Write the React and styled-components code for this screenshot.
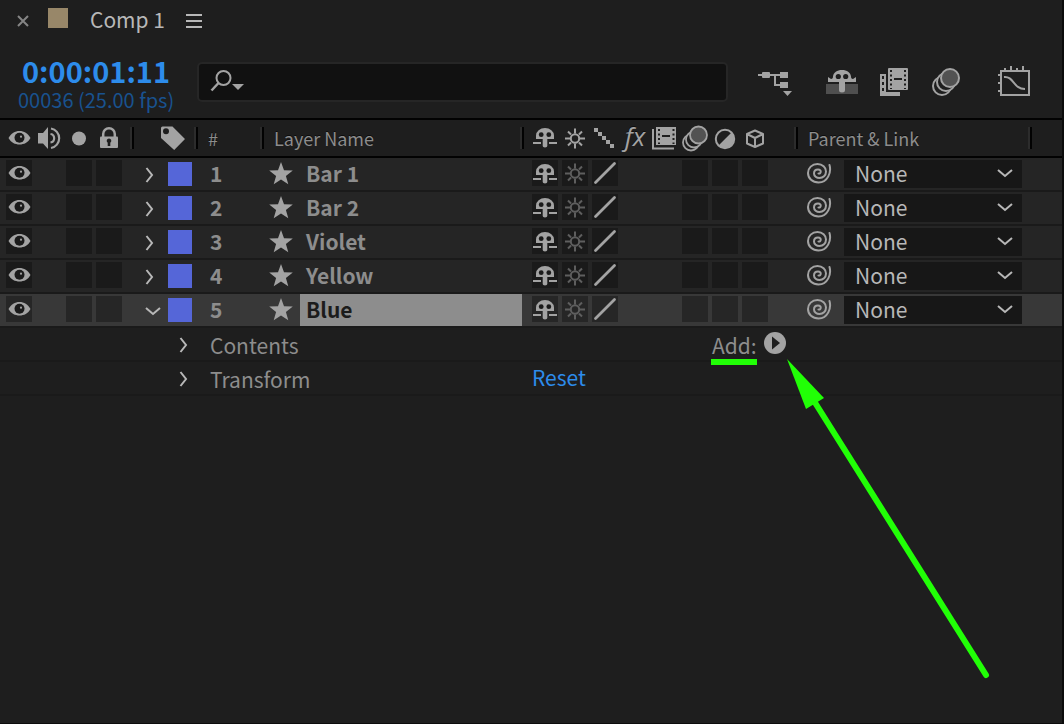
import React from "react";
import styled, { createGlobalStyle, css } from "styled-components";

const color = {
  panel: "#1e1e1e",
  row: "#252525",
  rowSelected: "#383838",
  well: "#1a1a1a",
  wellSelected: "#262626",
  line: "#1a1a1a",
  icon: "#a3a3a3",
  iconDim: "#5e5e5e",
  text: "#8d8d8d",
  textBright: "#b8b8b8",
  blue: "#2d8ceb",
  blueDim: "#19528f",
  label: "#5566d8",
  mark: "#21ff06",
};

const GlobalStyle = createGlobalStyle`
  * { box-sizing: border-box; }
  body {
    margin: 0;
    background: ${color.panel};
    color: ${color.text};
    font-family: "Noto Sans CJK SC", "Open Sans", sans-serif;
    font-size: 21px;
    line-height: 30px;
  }
  button, input, select { font: inherit; color: inherit; }
  svg { display: block; flex: none; }
`;

const Panel = styled.main`
  display: flex;
  flex-direction: column;
  min-height: 100vh;
  overflow: hidden;
  border-right: 2px solid #0c0c0c;
  border-bottom: 1px solid #0c0c0c;
`;

const TabBar = styled.header`
  display: flex;
  align-items: center;
  height: 42px;
  padding-left: 14px;
`;

const PlainButton = styled.button`
  display: flex;
  align-items: center;
  justify-content: center;
  flex: none;
  padding: 0;
  border: 0;
  background: none;
`;

const TabSwatch = styled.span`
  align-self: flex-start;
  width: 20px;
  height: 20px;
  margin: 8px 22px 0 16px;
  background: #988769;
`;

const TabTitle = styled.h1`
  margin: 0 18px 0 0;
  padding-bottom: 4px;
  font-size: 21px;
  font-weight: 400;
  color: ${color.textBright};
`;

const Toolbar = styled.div`
  display: flex;
  align-items: center;
  height: 72px;
  margin-top: 4px;
  padding-right: 30px;
`;

const TimeBlock = styled.div`
  flex: none;
  width: 197px;
  padding-top: 4px;
  padding-left: 18px;
`;

const TimeCode = styled.div`
  padding-left: 4px;
  font-size: 29px;
  font-weight: 700;
  line-height: 32px;
  color: ${color.blue};
`;

const FrameInfo = styled.div`
  font-size: 20px;
  line-height: 28px;
  color: ${color.blueDim};
`;

const SearchBox = styled.label`
  display: flex;
  align-items: center;
  flex: 1;
  min-width: 0;
  height: 40px;
  margin-right: 30px;
  padding-left: 11px;
  border: 2px solid #262626;
  border-radius: 5px;
  background: #111;
`;

const SearchInput = styled.input`
  flex: 1;
  min-width: 0;
  border: 0;
  outline: 0;
  background: none;
`;

const ToolGroup = styled.div`
  display: flex;
  gap: 16px;
`;

const ToolButton = styled(PlainButton)`
  width: 36px;
  height: 36px;
  margin-left: ${(p) => (p.$apart ? "16px" : "0")};
  margin-right: ${(p) => (p.$before ? "14px" : "0")};
`;

const Table = styled.table`
  width: 100%;
  table-layout: fixed;
  border-spacing: 0;
`;

const Col = styled.col`
  width: ${(p) => p.$width || "auto"};
`;

const HeadCell = styled.th`
  height: 40px;
  padding: 0;
  border-top: 2px solid #020202;
  border-bottom: 2px solid #020202;
  font-size: 18px;
  font-weight: 400;
  line-height: 36px;
  text-align: left;
  white-space: nowrap;
  text-shadow: 0 -1px 0 #0c0c0c;
`;

const HeadInner = styled.div`
  display: flex;
  align-items: center;
  gap: 4px;
  height: 36px;
  padding-left: ${(p) => p.$indent}px;
`;

const Divider = styled.span`
  flex: none;
  width: 4px;
  height: 22px;
  margin-left: auto;
  border-left: 2px solid #2c2c2c;
  border-right: 2px solid #020202;
`;

const Row = styled.tr`
  background: ${(p) => (p.$selected ? color.rowSelected : p.$sub ? color.panel : color.row)};
`;

const Cell = styled.td`
  height: 34px;
  padding: 0;
  border-bottom: 2px solid ${color.line};
  white-space: nowrap;
`;

const CellInner = styled.div`
  display: flex;
  align-items: center;
  gap: ${(p) => p.$gap || 0}px;
  height: 32px;
  padding-left: ${(p) => p.$indent || 0}px;
`;

const Wells = styled(CellInner)`
  align-items: flex-start;
  gap: 4px;
  padding-top: 2px;
`;

const Well = styled(PlainButton)`
  width: 26px;
  height: 26px;
  background: ${(p) => (p.$selected ? color.wellSelected : color.well)};
  ${(p) => p.$blank && css`visibility: hidden;`}
`;

const LabelSwatch = styled.span`
  width: 24px;
  height: 24px;
  background: ${color.label};
`;

const Strong = styled.span`
  padding-bottom: 2px;
  font-weight: 700;
`;

const LayerName = styled(Strong)`
  flex: 1;
  margin-right: 2px;
  padding-left: 6px;
  ${(p) => p.$selected && css`
    background: #8d8d8d;
    color: #1c1c1c;
  `}
`;

const ParentInner = styled(Wells)`
  gap: 12px;
  padding-left: 8px;
  padding-right: 10px;
`;

const SelectBox = styled.div`
  display: flex;
  position: relative;
  flex: 1;
  min-width: 0;
  svg {
    position: absolute;
    top: 5px;
    right: 9px;
    pointer-events: none;
  }
`;

const Select = styled.select`
  appearance: none;
  width: 100%;
  height: 28px;
  padding: 0 30px 2px 11px;
  border: 0;
  border-radius: 0;
  background: #171717;
  color: ${color.textBright};
  line-height: 26px;
`;

const PropertyName = styled.span`
  padding-top: 2px;
`;

const AddLabel = styled.label`
  position: relative;
  padding-top: 2px;
  &::after {
    content: "";
    position: absolute;
    left: -1px;
    right: 0;
    bottom: -5px;
    height: 6px;
    background: ${color.mark};
  }
`;

const AddButton = styled(PlainButton)`
  position: relative;
  width: 22px;
  height: 22px;
  margin-bottom: 2px;
`;

const Arrow = styled.svg`
  position: absolute;
  top: 27px;
  left: 23px;
  overflow: visible;
  pointer-events: none;
`;

const ResetLink = styled.a`
  padding-bottom: 2px;
  color: ${color.blue};
  text-decoration: none;
`;

const Glyph = ({ size = 26, children, ...rest }) => (
  <svg width={size} height={size} viewBox={`0 0 ${size} ${size}`} fill="none" aria-hidden="true" {...rest}>
    {children}
  </svg>
);

const EyeIcon = () => (
  <Glyph>
    <path d="M2.500 13C5 8.500 9 6 13.500 6S22 8.500 24.500 13C22 17.500 18 19.500 13.500 19.500S5 17.500 2.500 13Z" fill={color.icon} />
    <circle cx="13.500" cy="12.700" r="5" fill="#1a1a1a" />
    <circle cx="15" cy="11.700" r="1.100" fill={color.icon} />
  </Glyph>
);

const SpeakerIcon = () => (
  <Glyph>
    <path d="M2 8H7L12 2V24L7 18.500H2Z" fill={color.icon} />
    <g stroke={color.icon} strokeWidth="2.200">
      <path d="M14.500 9A4.300 4.300 0 0 1 14.500 17.500" />
      <path d="M15 3.500A9.900 9.900 0 0 1 15 23" />
    </g>
  </Glyph>
);

const SoloIcon = () => (
  <Glyph>
    <circle cx="13" cy="13.500" r="7" fill={color.icon} />
  </Glyph>
);

const LockIcon = () => (
  <Glyph>
    <path d="M7.200 12V9a5.800 5.800 0 0 1 11.600 0V12" stroke={color.icon} strokeWidth="2.500" />
    <rect x="4" y="11.500" width="18" height="11.500" rx="1" fill={color.icon} />
    <path d="M13 13.500a2.300 2.300 0 0 1 1.300 4.200V21h-2.600v-3.300A2.300 2.300 0 0 1 13 13.500Z" fill="#1e1e1e" />
  </Glyph>
);

const TagIcon = () => (
  <Glyph>
    <path d="M2.500 1.500H12.500L25 14L14.200 25L1 13V3a1.500 1.500 0 0 1 1.500-1.500Z" fill={color.icon} />
    <circle cx="6" cy="6.200" r="3" fill="#1e1e1e" />
  </Glyph>
);

const ShyIcon = ({ raised }) => (
  <Glyph>
    <g transform={raised ? "translate(0 -1)" : undefined}>
      <path d="M4 15V11.500a9 7.500 0 0 1 18 0V15H15.300V22a2.300 1.500 0 0 1-4.600 0V15Z" fill={color.icon} />
      <circle cx="9.200" cy="10.700" r="2.400" fill="#1a1a1a" />
      <circle cx="16.800" cy="10.700" r="2.400" fill="#1a1a1a" />
      <path d="M1 19H9M17 19H25" stroke={color.icon} strokeWidth="2" />
    </g>
  </Glyph>
);

const SunIcon = ({ dim }) => (
  <Glyph stroke={dim ? color.iconDim : color.icon} strokeWidth="2">
    <circle cx="13" cy="13.500" r="4.200" />
    <path d="M13 3.500V8.500M13 18.500V23.500M3 13.500H8M18 13.500H23M6 6.500L9 9.500M17 17.500L20 20.500M20 6.500L17 9.500M9 17.500L6 20.500" />
  </Glyph>
);

const StairsIcon = () => (
  <Glyph>
    <path d="M2 3h4v4h4v4h4v4h4v4h4v4h-4v-4h-4v-4h-4v-4h-4v-4H2Z" fill={color.icon} />
  </Glyph>
);

const SlashIcon = () => (
  <Glyph>
    <path d="M3.500 22.500L22.500 3.500" stroke={color.icon} strokeWidth="2.800" strokeLinecap="round" />
  </Glyph>
);

const FxMark = styled.span`
  width: 26px;
  margin-bottom: 4px;
  font-family: "Open Sans", sans-serif;
  font-size: 26px;
  font-style: italic;
  line-height: 26px;
  text-align: center;
  color: ${color.icon};
`;

const FrameBlendIcon = () => (
  <Glyph>
    <path d="M1 4V23.500H22" stroke={color.icon} strokeWidth="2" />
    <rect x="4" y="2" width="20" height="18" fill={color.icon} />
    <path d="M7 4V19M21.500 4V19" stroke="#1e1e1e" strokeWidth="2" strokeDasharray="2 2.500" />
    <path d="M10 11H18" stroke="#1e1e1e" strokeWidth="2" />
  </Glyph>
);

const MotionBlurIcon = () => (
  <Glyph stroke={color.icon} strokeWidth="1.800" overflow="visible">
    <circle cx="9" cy="17.500" r="8" fill="#1e1e1e" />
    <circle cx="12" cy="14.500" r="8" fill="#1e1e1e" />
    <circle cx="16.500" cy="10" r="8.500" fill="#525252" />
  </Glyph>
);

const AdjustmentIcon = () => (
  <Glyph>
    <circle cx="13" cy="14" r="9.200" stroke={color.icon} strokeWidth="2" />
    <path d="M19.500 7.500A9.200 9.200 0 0 1 6.500 20.500Z" fill={color.icon} />
  </Glyph>
);

const CubeIcon = () => (
  <Glyph stroke={color.icon} strokeWidth="2" strokeLinejoin="round">
    <path d="M13 5.500L21 9V18.500L13 22L5 18.500V9ZM5 9L13 13L21 9M13 13V22" />
  </Glyph>
);

const SpiralIcon = () => (
  <Glyph stroke={color.icon} strokeWidth="2" strokeLinecap="round">
    <path d="M23.500 5C25.500 12 22 22.500 12.500 22.500C6.500 22.500 2 18.500 2 13C2 8 6 4 11.500 4C16.500 4 20 7.500 20 11.500C20 15.500 17 18 13.500 18C10.500 18 8 16 8 13.500C8 11 9.800 9.500 12 9.500C14 9.500 15.200 11 14.500 12.500C14 13.500 13 13.800 12.500 13.500" />
  </Glyph>
);

const ChevronIcon = ({ open }) => (
  <Glyph size={16} stroke={color.textBright} strokeWidth="2" overflow="visible">
    <path d={open ? "M0 6L7 12L14 6" : "M.5 2L6 9L.5 16"} />
  </Glyph>
);

const StarIcon = () => (
  <Glyph size={24} overflow="visible">
    <path d="M11 0L14 8.200L22.800 8.500L15.900 13.900L18.300 22.300L11 17.500L3.700 22.300L6.100 13.900L-.8 8.500L8 8.200Z" fill={color.icon} />
  </Glyph>
);

const FlowchartIcon = () => (
  <Glyph size={36} fill={color.icon}>
    <path d="M0 11H24M17 11V21H24" stroke={color.icon} strokeWidth="2" fill="none" />
    <rect x="4" y="8" width="8" height="6" rx="1" />
    <rect x="22" y="8" width="8" height="6" />
    <rect x="22" y="18" width="8" height="6" />
    <path d="M25 27H34L29.500 32Z" />
  </Glyph>
);

const HideShyIcon = () => (
  <Glyph size={36}>
    <rect x="2" y="20" width="32" height="10" fill="#4f4f4f" />
    <path d="M4 13L7 15C8.500 15 9 14 9 12.500C9.500 8.500 13 6 18 6S26.500 8.500 27 12.500C27 14 27.500 15 29 15L32 13V18H21V26A3 2.500 0 0 1 15 26V18H4Z" fill={color.icon} />
    <circle cx="14.300" cy="12.500" r="2.600" fill="#1e1e1e" />
    <circle cx="21.700" cy="12.500" r="2.600" fill="#1e1e1e" />
  </Glyph>
);

const FilmIcon = () => (
  <Glyph size={36}>
    <path d="M4 10H10V28H24V32H4Z" fill={color.icon} />
    <path d="M7 12V30" stroke="#1e1e1e" strokeWidth="2" strokeDasharray="3 3" />
    <rect x="12" y="4" width="20" height="22" rx="1" fill={color.icon} />
    <path d="M15 6V25M29 6V25" stroke="#1e1e1e" strokeWidth="2" strokeDasharray="2 2.500" />
    <path d="M18 15H26" stroke="#1e1e1e" strokeWidth="2" />
  </Glyph>
);

const EnableBlurIcon = () => (
  <Glyph size={36} stroke={color.icon} strokeWidth="2">
    <circle cx="14" cy="22" r="9" fill="#1e1e1e" />
    <circle cx="18" cy="18" r="9" fill="#1e1e1e" />
    <circle cx="22" cy="14" r="9" fill="#525252" />
  </Glyph>
);

const GraphIcon = () => (
  <Glyph size={36} stroke={color.icon} strokeWidth="2">
    <rect x="5" y="7" width="28" height="24" />
    <path d="M9 4V7M15 2V7M21 4V7M27 2V7M2 11H5M2 19H5M2 27H5" />
    <path d="M8 13C18 12 17 25 29 25" />
  </Glyph>
);

const layers = [
  { name: "Bar 1" },
  { name: "Bar 2" },
  { name: "Violet" },
  { name: "Yellow" },
  { name: "Blue", selected: true },
];

function LayerRow({ index, name, selected }) {
  return (
    <Row $selected={selected}>
      <Cell>
        <Wells $indent={6}>
          <Well $selected={selected} aria-label="Video"><EyeIcon /></Well>
          <Well $blank aria-label="Audio" />
          <Well $selected={selected} aria-label="Solo" />
          <Well $selected={selected} aria-label="Lock" />
        </Wells>
      </Cell>
      <Cell>
        <CellInner $indent={12} $gap={6}>
          <PlainButton aria-label="Expand layer"><ChevronIcon open={selected} /></PlainButton>
          <LabelSwatch />
        </CellInner>
      </Cell>
      <Cell>
        <CellInner $indent={12}><Strong>{index}</Strong></CellInner>
      </Cell>
      <Cell>
        <CellInner $indent={6} $gap={6}>
          <StarIcon />
          <LayerName $selected={selected}>{name}</LayerName>
        </CellInner>
      </Cell>
      <Cell>
        <Wells $indent={8}>
          <Well $selected={selected} aria-label="Shy"><ShyIcon /></Well>
          <Well $selected={selected} aria-label="Collapse"><SunIcon dim /></Well>
          <Well $selected={selected} aria-label="Quality"><SlashIcon /></Well>
          <Well $blank aria-label="Effects" />
          <Well $blank aria-label="Frame blending" />
          <Well $selected={selected} aria-label="Motion blur" />
          <Well $selected={selected} aria-label="Adjustment layer" />
          <Well $selected={selected} aria-label="3D layer" />
        </Wells>
      </Cell>
      <Cell>
        <ParentInner>
          <PlainButton aria-label="Pick whip"><SpiralIcon /></PlainButton>
          <SelectBox>
            <Select aria-label={`Parent of ${name}`} defaultValue="None">
              <option>None</option>
            </Select>
            <Glyph size={16} stroke={color.textBright} strokeWidth="2">
              <path d="M1 5L8 11L15 5" />
            </Glyph>
          </SelectBox>
        </ParentInner>
      </Cell>
      <Cell />
    </Row>
  );
}

export default function App() {
  return (
    <>
      <GlobalStyle />
      <Panel>
        <TabBar>
          <PlainButton aria-label="Close tab">
            <Glyph size={18} stroke="#858585" strokeWidth="2"><path d="M4 4L14 14M14 4L4 14" /></Glyph>
          </PlainButton>
          <TabSwatch />
          <TabTitle>Comp 1</TabTitle>
          <PlainButton aria-label="Panel menu">
            <Glyph size={20} stroke={color.textBright} strokeWidth="2"><path d="M3 4H19M3 10H19M3 16H19" /></Glyph>
          </PlainButton>
        </TabBar>

        <Toolbar>
          <TimeBlock>
            <TimeCode>0:00:01:11</TimeCode>
            <FrameInfo>00036 (25.00 fps)</FrameInfo>
          </TimeBlock>
          <SearchBox>
            <Glyph size={36}>
              <circle cx="13.500" cy="14" r="7" stroke={color.icon} strokeWidth="2" />
              <path d="M8.500 19L1.500 26.500" stroke={color.icon} strokeWidth="2.500" />
              <path d="M22 20H34L28 26Z" fill={color.icon} />
            </Glyph>
            <SearchInput type="text" aria-label="Search layers" />
          </SearchBox>
          <ToolGroup>
            <ToolButton $before aria-label="Mini-flowchart"><FlowchartIcon /></ToolButton>
            <ToolButton aria-label="Hide shy layers"><HideShyIcon /></ToolButton>
            <ToolButton aria-label="Enable frame blending"><FilmIcon /></ToolButton>
            <ToolButton aria-label="Enable motion blur"><EnableBlurIcon /></ToolButton>
            <ToolButton $apart aria-label="Graph editor"><GraphIcon /></ToolButton>
          </ToolGroup>
        </Toolbar>

        <Table>
          <colgroup>
            <Col $width="134px" />
            <Col $width="64px" />
            <Col $width="66px" />
            <Col />
            <Col $width="274px" />
            <Col $width="234px" />
            <Col $width="30px" />
          </colgroup>
          <thead>
            <tr>
              <HeadCell>
                <HeadInner $indent={6}>
                  <EyeIcon /><SpeakerIcon /><SoloIcon /><LockIcon />
                  <Divider />
                </HeadInner>
              </HeadCell>
              <HeadCell><HeadInner $indent={26}><TagIcon /><Divider /></HeadInner></HeadCell>
              <HeadCell><HeadInner $indent={10}>#<Divider /></HeadInner></HeadCell>
              <HeadCell><HeadInner $indent={10}>Layer Name<Divider /></HeadInner></HeadCell>
              <HeadCell>
                <HeadInner $indent={8}>
                  <ShyIcon raised /><SunIcon /><StairsIcon /><FxMark>fx</FxMark>
                  <FrameBlendIcon /><MotionBlurIcon /><AdjustmentIcon /><CubeIcon />
                  <Divider />
                </HeadInner>
              </HeadCell>
              <HeadCell><HeadInner $indent={10}>Parent &amp; Link<Divider /></HeadInner></HeadCell>
              <HeadCell />
            </tr>
          </thead>
          <tbody>
            {layers.map((layer, i) => (
              <LayerRow key={layer.name} index={i + 1} {...layer} />
            ))}
            <Row $sub>
              <Cell />
              <Cell>
                <CellInner $indent={46}>
                  <PlainButton aria-label="Expand contents"><ChevronIcon /></PlainButton>
                </CellInner>
              </Cell>
              <Cell colSpan={2}><CellInner $indent={12}><PropertyName>Contents</PropertyName></CellInner></Cell>
              <Cell>
                <CellInner $indent={188} $gap={7}>
                  <AddLabel htmlFor="add-property">Add:</AddLabel>
                  <AddButton id="add-property">
                    <Glyph size={22}>
                      <circle cx="11" cy="11" r="11" fill={color.icon} />
                      <path d="M8 4.500L16 11L8 17.500Z" fill="#1e1e1e" />
                    </Glyph>
                    <Arrow width="204" height="322" viewBox="0 0 204 322" aria-hidden="true">
                      <path d="M27 42L199 316" stroke={color.mark} strokeWidth="6" strokeLinecap="round" />
                      <path d="M0 0L37 39L19 50Z" fill={color.mark} />
                    </Arrow>
                  </AddButton>
                </CellInner>
              </Cell>
              <Cell />
              <Cell />
            </Row>
            <Row $sub>
              <Cell />
              <Cell>
                <CellInner $indent={46}>
                  <PlainButton aria-label="Expand transform"><ChevronIcon /></PlainButton>
                </CellInner>
              </Cell>
              <Cell colSpan={2}><CellInner $indent={12}><PropertyName>Transform</PropertyName></CellInner></Cell>
              <Cell><CellInner $indent={8}><ResetLink href="#reset">Reset</ResetLink></CellInner></Cell>
              <Cell />
              <Cell />
            </Row>
          </tbody>
        </Table>
      </Panel>
    </>
  );
}
